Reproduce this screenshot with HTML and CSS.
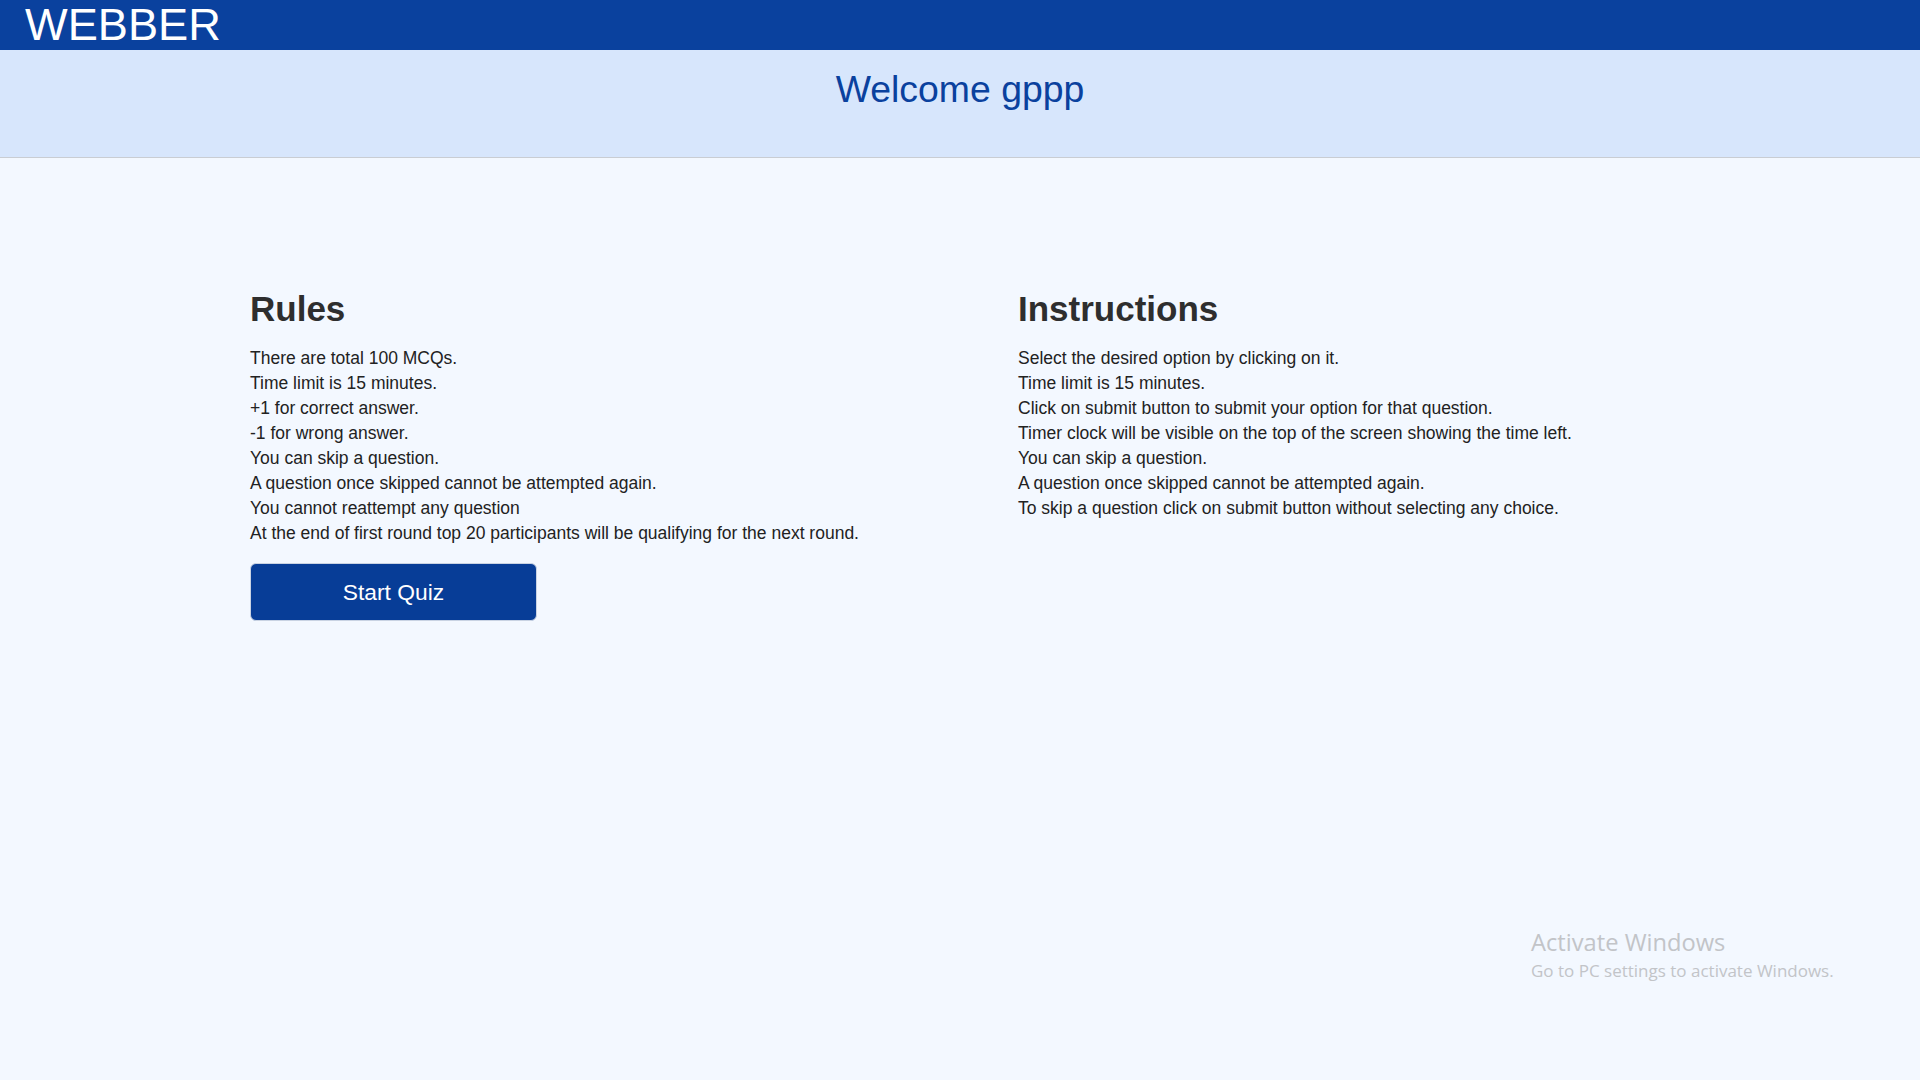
FILE: index.html
```html
<!DOCTYPE html>
<html lang="en">
<head>
<meta charset="utf-8">
<title>Webber Quiz</title>
<link rel="stylesheet" href="styles.css">
</head>
<body>
<header class="topbar">
  <div class="brand">WEBBER</div>
</header>
<section class="welcome">
  <h1 class="welcome-title">Welcome gppp</h1>
</section>
<main class="content">
  <section class="column">
    <h2 class="col-title">Rules</h2>
    <ul class="list">
      <li>There are total 100 MCQs.</li>
      <li>Time limit is 15 minutes.</li>
      <li>+1 for correct answer.</li>
      <li>-1 for wrong answer.</li>
      <li>You can skip a question.</li>
      <li>A question once skipped cannot be attempted again.</li>
      <li>You cannot reattempt any question</li>
      <li>At the end of first round top 20 participants will be qualifying for the next round.</li>
    </ul>
    <button class="start-btn" type="button">Start Quiz</button>
  </section>
  <section class="column">
    <h2 class="col-title">Instructions</h2>
    <ul class="list">
      <li>Select the desired option by clicking on it.</li>
      <li>Time limit is 15 minutes.</li>
      <li>Click on submit button to submit your option for that question.</li>
      <li>Timer clock will be visible on the top of the screen showing the time left.</li>
      <li>You can skip a question.</li>
      <li>A question once skipped cannot be attempted again.</li>
      <li>To skip a question click on submit button without selecting any choice.</li>
    </ul>
  </section>
</main>
<div class="activate">
  <div class="activate-title">Activate Windows</div>
  <div class="activate-sub">Go to PC settings to activate Windows.</div>
</div>
</body>
</html>
```
FILE: styles.css
```css
html, body {
  margin: 0;
  padding: 0;
}
body {
  background: #f3f8ff;
  font-family: "Liberation Sans", Arial, sans-serif;
  min-height: 1080px;
}
.topbar {
  background: #0a419e;
  height: 50px;
  padding-left: 25px;
}
.brand {
  color: #ffffff;
  font-size: 45.2px;
  line-height: 50px;
}
.welcome {
  background: #d7e6fc;
  height: 107px;
  border-bottom: 1px solid #c9cdd3;
  box-sizing: content-box;
}
.welcome-title {
  margin: 0;
  padding-top: 14px;
  text-align: center;
  color: #0a419e;
  font-weight: normal;
  font-size: 37.4px;
  line-height: 50px;
}
.content {
  display: grid;
  grid-template-columns: 768px 768px;
  padding: 131px 0 0 250px;
  font-family: "Liberation Sans Narrow", "Liberation Sans", Arial, sans-serif;
}
.col-title {
  margin: 0;
  font-size: 35px;
  line-height: 40px;
  font-weight: bold;
  color: #2e2e2e;
}
.list {
  list-style: none;
  margin: 17px 0 0;
  padding: 0;
  font-size: 17.5px;
  line-height: 25px;
  color: #222222;
}
.start-btn {
  margin-top: 17px;
  width: 287px;
  height: 58px;
  background: #073d97;
  color: #ffffff;
  border: 1px solid #c9d3e3;
  border-radius: 6px;
  font-family: "Liberation Sans Narrow", "Liberation Sans", Arial, sans-serif;
  font-size: 22.8px;
  padding: 0;
  cursor: pointer;
}
.activate {
  position: absolute;
  left: 1531px;
  top: 927px;
  color: #c2c4c8;
  font-family: "Open Sans", "Noto Sans", sans-serif;
}
.activate-title {
  font-size: 23.7px;
  line-height: 30px;
}
.activate-sub {
  font-size: 17px;
  line-height: 28px;
}
```
